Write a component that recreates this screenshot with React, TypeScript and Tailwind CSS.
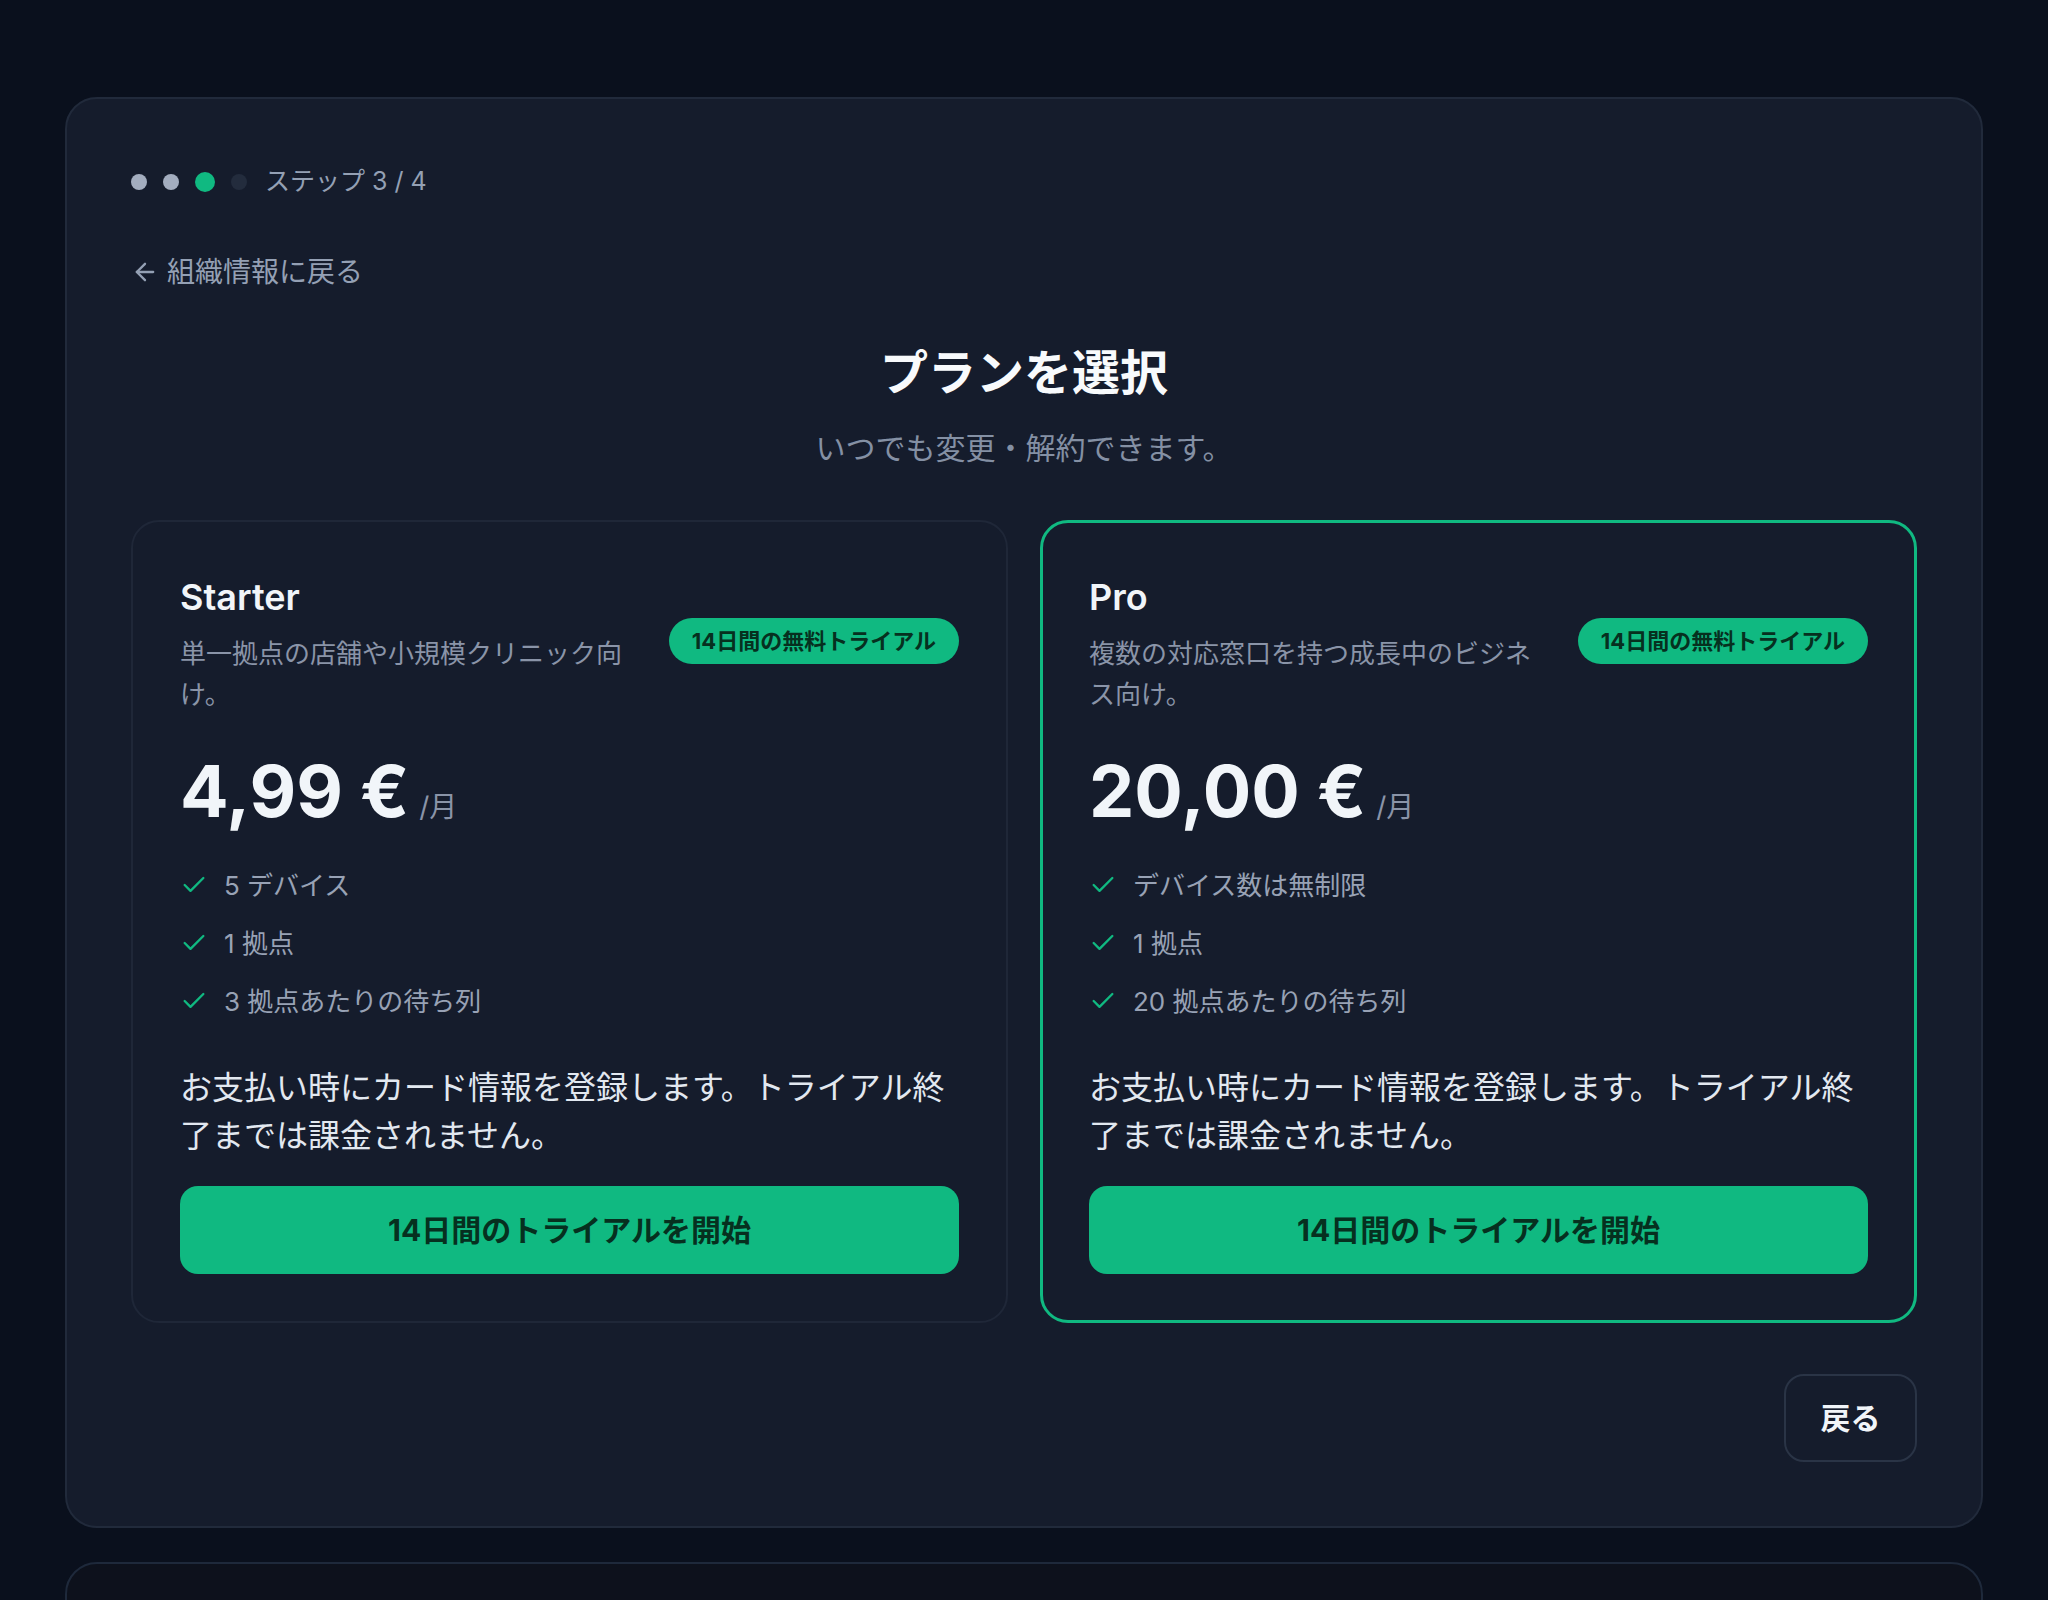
import { ArrowLeft, Check } from 'lucide-react'

const plans = [
  {
    name: 'Starter',
    desc: '単一拠点の店舗や小規模クリニック向け。',
    price: '4,99 €',
    features: ['5 デバイス', '1 拠点', '3 拠点あたりの待ち列'],
    selected: false,
  },
  {
    name: 'Pro',
    desc: '複数の対応窓口を持つ成長中のビジネス向け。',
    price: '20,00 €',
    features: ['デバイス数は無制限', '1 拠点', '20 拠点あたりの待ち列'],
    selected: true,
  },
]

function PlanCard({ plan }: { plan: (typeof plans)[number] }) {
  return (
    <div
      className={
        plan.selected
          ? 'rounded-[28px] border-[3px] border-[#10b981] bg-[#151c2c] px-[46px] pt-[52px] pb-[46px]'
          : 'rounded-[28px] border-2 border-[#1f2738] bg-[#151c2c] px-[47px] pt-[53px] pb-[47px]'
      }
    >
      <div className="flex items-center gap-8">
        <div className="min-w-0 flex-1">
          <h3 className="text-[36px] leading-[44px] font-semibold text-[#f1f5f9]">{plan.name}</h3>
          <p className="mt-[14px] text-[26px] leading-[41px] text-[#8a94a8]">{plan.desc}</p>
        </div>
        <span className="mb-[8px] shrink-0 rounded-full bg-[#10b981] px-[23px] py-[7px] text-[22px] leading-[32px] font-bold text-[#06301f]">
          14日間の無料トライアル
        </span>
      </div>

      <div className="mt-10 flex items-baseline">
        <span className="text-[72px] leading-[72px] font-bold text-[#f1f5f9]">{plan.price}</span>
        <span className="ml-[10px] text-[28px] text-[#8a94a8]">/月</span>
      </div>

      <ul className="mt-[37px] flex flex-col gap-[18px]">
        {plan.features.map((f) => (
          <li key={f} className="flex h-10 items-center gap-4 text-[26px] text-[#98a2b5]">
            <Check size={28} strokeWidth={2} className="shrink-0 text-[#10b981]" />
            <span>{f}</span>
          </li>
        ))}
      </ul>

      <p className="mt-[43px] text-[32px] leading-[48px] text-[#e2e8f0]">
        お支払い時にカード情報を登録します。トライアル終了までは課金されません。
      </p>

      <button className="mt-[26px] flex h-[88px] w-full items-center justify-center rounded-[18px] bg-[#10b981] text-[30px] font-bold text-[#06301f]">
        14日間のトライアルを開始
      </button>
    </div>
  )
}

export default function App() {
  return (
    <div
      className="h-[1600px] overflow-hidden bg-[#0a101d] px-[65px] pt-[97px]"
      style={{ fontFamily: 'Inter, "Noto Sans CJK JP", sans-serif' }}
    >
      <div className="rounded-[32px] border-2 border-[#212a3b] bg-[#151c2c] p-16">
        <div className="flex h-[38px] items-center gap-4">
          <span className="h-4 w-4 rounded-full bg-[#a3adbf]" />
          <span className="h-4 w-4 rounded-full bg-[#a3adbf]" />
          <span className="h-5 w-5 rounded-full bg-[#10b981]" />
          <span className="h-4 w-4 rounded-full bg-[#232c3d]" />
          <span className="ml-[2px] text-[25px] text-[#94a0b4]">ステップ 3 / 4</span>
        </div>

        <a className="mt-[51px] flex h-10 items-center gap-2 text-[28px] text-[#94a0b4]">
          <ArrowLeft size={28} strokeWidth={2} />
          <span>組織情報に戻る</span>
        </a>

        <h1 className="mt-[51px] text-center text-[48px] leading-[60px] font-bold text-[#f8fafc]">
          プランを選択
        </h1>
        <p className="mt-6 text-center text-[30px] leading-[42px] text-[#8490a4]">
          いつでも変更・解約できます。
        </p>

        <div className="mt-[51px] grid grid-cols-2 gap-8">
          {plans.map((p) => (
            <PlanCard key={p.name} plan={p} />
          ))}
        </div>

        <div className="mt-[51px] flex justify-end">
          <button className="h-[88px] w-[133px] rounded-[20px] border-2 border-[#2a3446] text-[30px] font-bold text-[#f1f5f9]">
            戻る
          </button>
        </div>
      </div>

      <div className="mt-[34px] h-[200px] rounded-[32px] border-2 border-[#1e293b] bg-[#0d111c]" />
    </div>
  )
}
